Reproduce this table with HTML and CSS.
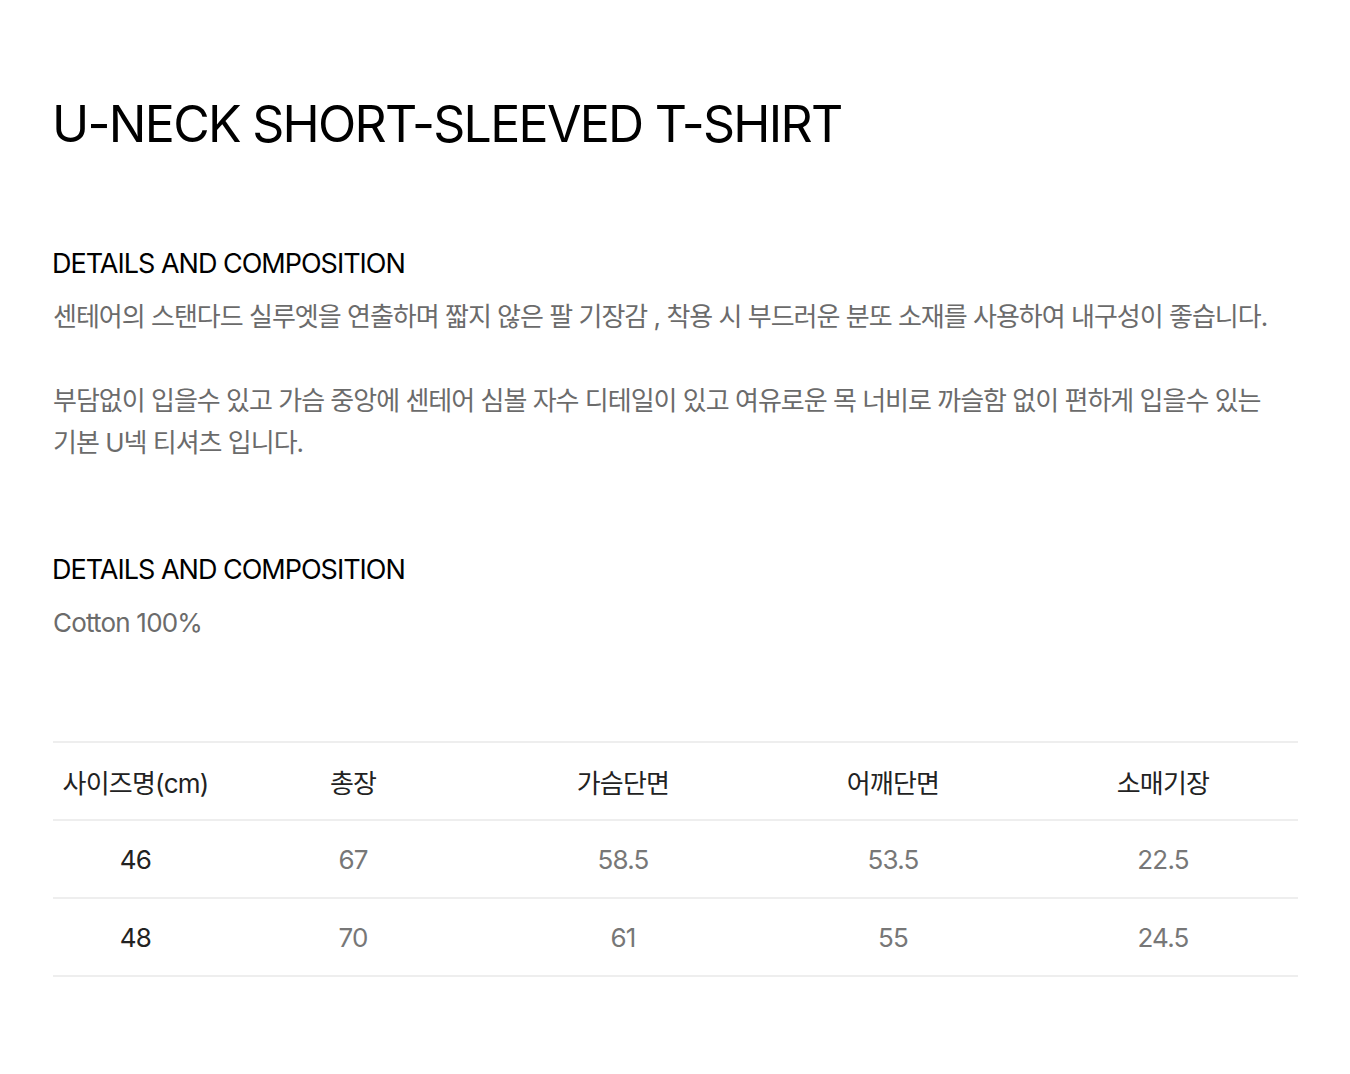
FILE: index.html
```html
<!DOCTYPE html>
<html lang="ko">
<head>
<meta charset="utf-8">
<title>U-NECK SHORT-SLEEVED T-SHIRT</title>
<link rel="stylesheet" href="styles.css">
</head>
<body>
<main class="page">
  <h1 class="title">U-NECK SHORT-SLEEVED T-SHIRT</h1>

  <section class="section details">
    <h2 class="section-title">DETAILS AND COMPOSITION</h2>
    <p class="body-text">센테어의 스탠다드 실루엣을 연출하며 짧지 않은 팔 기장감 , 착용 시 부드러운 분또 소재를 사용하여 내구성이 좋습니다.<br><br>부담없이 입을수 있고 가슴 중앙에 센테어 심볼 자수 디테일이 있고 여유로운 목 너비로 까슬함 없이 편하게 입을수 있는<br>기본 U넥 티셔츠 입니다.</p>
  </section>

  <section class="section composition">
    <h2 class="section-title">DETAILS AND COMPOSITION</h2>
    <p class="body-text latin">Cotton 100%</p>
  </section>

  <table class="size-table">
    <colgroup>
      <col class="col-size">
      <col><col><col><col>
    </colgroup>
    <thead>
      <tr>
        <th>사이즈명(cm)</th>
        <th>총장</th>
        <th>가슴단면</th>
        <th>어깨단면</th>
        <th>소매기장</th>
      </tr>
    </thead>
    <tbody>
      <tr>
        <td class="size">46</td>
        <td>67</td>
        <td>58.5</td>
        <td>53.5</td>
        <td>22.5</td>
      </tr>
      <tr>
        <td class="size">48</td>
        <td>70</td>
        <td>61</td>
        <td>55</td>
        <td>24.5</td>
      </tr>
    </tbody>
  </table>
</main>
</body>
</html>
```

FILE: styles.css
```css
* { box-sizing: border-box; }

html, body {
  margin: 0;
  padding: 0;
  background: #ffffff;
}

body {
  font-family: Inter, "Noto Sans CJK KR", sans-serif;
  color: #000;
}

.page {
  padding: 92px 52px 0 52px;
}

.title {
  margin: 0;
  font-size: 50px;
  font-weight: 400;
  letter-spacing: -1.7px;
  line-height: 64px;
  color: #000;
}

.details {
  padding-top: 91px;
}

.composition {
  padding-top: 89px;
}

.section-title {
  margin: 0;
  font-size: 27px;
  font-weight: 400;
  letter-spacing: -1px;
  line-height: 34px;
  color: #000;
}

.body-text {
  margin: 15px 0 0 1px;
  font-size: 26px;
  line-height: 42px;
  letter-spacing: -1px;
  color: #6b6b6b;
}

.body-text.latin {
  letter-spacing: -0.8px;
}

.size-table {
  margin-top: 97px;
  margin-left: 1px;
  width: 1245px;
  border-collapse: collapse;
  table-layout: fixed;
}

.col-size { width: 165px; }

.size-table th,
.size-table td {
  height: 78px;
  padding: 0;
  text-align: center;
  vertical-align: middle;
  font-size: 26px;
  font-weight: 400;
  letter-spacing: -0.8px;
  border-top: 2px solid #eeeeee;
  border-bottom: 2px solid #eeeeee;
}

.size-table th {
  color: #222;
}

.size-table td {
  color: #777;
}

.size-table td.size {
  color: #222;
}
```
